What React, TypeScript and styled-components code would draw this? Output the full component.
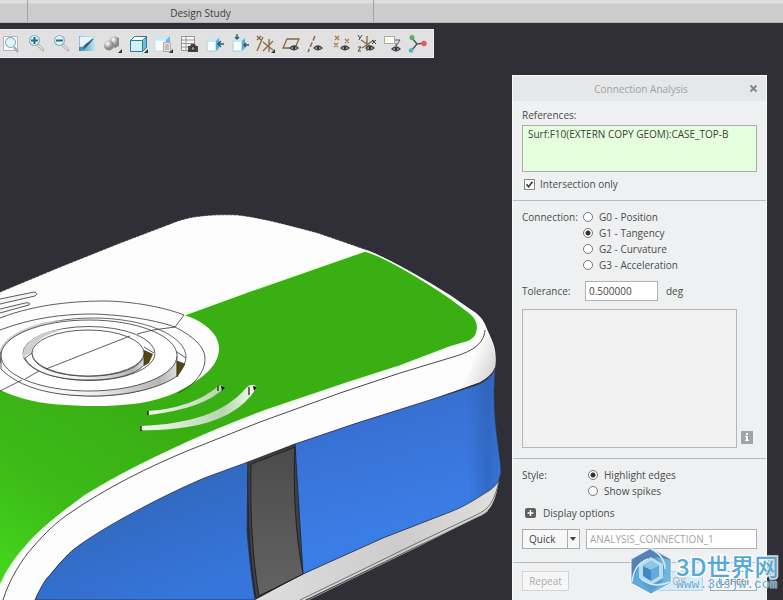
import React, { useState } from "react";
import styled, { createGlobalStyle } from "styled-components";

const GlobalStyle = createGlobalStyle`
  * { box-sizing: border-box; }
  body { margin: 0; background: #302f37; }
  body, button, input, select, textarea {
    font-family: "Open Sans", "Noto Sans", sans-serif;
    font-size: 10px;
    color: #4c4c4c;
  }
`;

const Page = styled.div`
  position: relative;
  display: flex;
  flex-direction: column;
  height: 100vh;
  overflow: hidden;
`;

const Scene = styled.svg`
  position: absolute;
  inset: 0;
  width: 100%;
  height: 100%;
`;

const GroupBar = styled.header`
  position: relative;
  display: flex;
  height: 23px;
  flex: none;
  background: linear-gradient(#dedede 0, #dedede 3px, #cbcbcb 4px, #cdcdcd 100%);
  border-bottom: 1px solid #b4b4b4;
`;

const Group = styled.div<{ $width: number }>`
  width: ${(p) => p.$width}px;
  padding-top: 4px;
  border-right: 1px solid #a5a5a5;
  text-align: center;
  line-height: 18px;
  color: #404040;
`;

const Toolbar = styled.nav`
  position: relative;
  display: flex;
  flex: none;
  justify-content: space-between;
  align-items: center;
  width: 100%;
  max-width: 434px;
  height: 29px;
  margin-top: 6px;
  padding-right: 5px;
  background: #e1e1e1;
  border: 1px solid #eee;
  border-left: 0;
`;

const ToolButton = styled.button`
  display: block;
  width: 20px;
  height: 20px;
  padding: 0;
  border: 0;
  background: none;
  svg { display: block; }
`;

const Workspace = styled.main`
  position: relative;
  display: flex;
  justify-content: flex-end;
  align-items: stretch;
  flex: 1;
  min-height: 0;
  padding: 17px 16px 0 0;
`;

const Dialog = styled.section`
  display: flex;
  flex-direction: column;
  width: 255px;
  background: #eef0f1;
  border: 1px solid #fafafa;
  border-bottom: 0;
  overflow: hidden;
`;

const TitleBar = styled.div`
  display: flex;
  align-items: center;
  flex: none;
  height: 25px;
  padding: 0 8px 0 20px;
  background: #e5e7e8;
`;

const Title = styled.h1`
  flex: 1;
  margin: 0;
  text-align: center;
  font-size: 10px;
  font-weight: 400;
  color: #a0a2a4;
`;

const CloseButton = styled.button`
  display: flex;
  padding: 0;
  border: 0;
  background: none;
`;

const Section = styled.div<{ $height?: number; $top?: number }>`
  display: flex;
  flex-direction: column;
  flex: none;
  height: ${(p) => (p.$height ? p.$height + "px" : "auto")};
  padding: ${(p) => p.$top ?? 8}px 9px 0;
  & + & { border-top: 1px solid #b9bbbc; }
`;

const Caption = styled.label<{ $width?: number }>`
  width: ${(p) => (p.$width ? p.$width + "px" : "auto")};
  flex: none;
  line-height: 16px;
`;

const References = styled.textarea`
  display: block;
  width: 100%;
  height: 47px;
  margin: 2px 0 4px;
  padding: 1px 5px;
  border: 1px solid #a8aeae;
  background: #e6ffdd;
  line-height: 14px;
  color: #3c423c;
  resize: none;
  white-space: nowrap;
  overflow: hidden;
`;

const CheckLabel = styled.label`
  display: flex;
  align-items: center;
  gap: 5px;
  height: 16px;
  padding-left: 2px;
`;

const CheckBox = styled.input`
  appearance: none;
  width: 11px;
  height: 11px;
  margin: 0;
  border: 1px solid #888;
  background: #fff;
  &:checked {
    background: #fff url("data:image/svg+xml,%3Csvg xmlns='http://www.w3.org/2000/svg' viewBox='0 0 9 9'%3E%3Cpath d='M1.5 4.3 3.6 6.8 7.5 1.8' fill='none' stroke='%23333' stroke-width='1.5'/%3E%3C/svg%3E");
  }
`;

const Row = styled.div<{ $gap?: number; $top?: number; $center?: boolean }>`
  display: flex;
  align-items: ${(p) => (p.$center ? "center" : "flex-start")};
  gap: ${(p) => p.$gap ?? 0}px;
  margin-top: ${(p) => p.$top ?? 0}px;
`;

const RadioGroup = styled.div`
  display: flex;
  flex-direction: column;
`;

const RadioLabel = styled.label`
  display: flex;
  align-items: center;
  gap: 6px;
  height: 16px;
`;

const Radio = styled.input`
  appearance: none;
  width: 10px;
  height: 10px;
  margin: 0;
  border: 1px solid #777;
  border-radius: 50%;
  background: #fff;
  &:checked { background: radial-gradient(circle, #333 0, #333 2px, #fff 3px); }
`;

const TextInput = styled.input<{ $width?: number }>`
  width: ${(p) => (p.$width ? p.$width + "px" : "100%")};
  min-width: 0;
  height: 20px;
  padding: 0 3px;
  border: 1px solid #b0b3b4;
  background: #fff;
  color: #444;
  &::placeholder { color: #a3a5a7; opacity: 1; }
`;

const ResultList = styled.div`
  flex: 1;
  height: 139px;
  border: 1px solid #b4b6b7;
  background: #f2f2f2;
`;

const InfoButton = styled.button`
  align-self: flex-end;
  width: 12px;
  height: 13px;
  margin: 0 4px 4px 0;
  padding: 0;
  border: 0;
  background: #a1a3a4;
  svg { display: block; }
`;

const Expander = styled.button`
  display: flex;
  align-items: center;
  gap: 7px;
  height: 16px;
  margin-top: 6px;
  padding: 0 3px;
  border: 0;
  background: none;
`;

const SelectBox = styled.div`
  position: relative;
  flex: none;
  width: 58px;
  select {
    appearance: none;
    display: block;
    width: 100%;
    height: 20px;
    padding: 0 6px;
    border: 1px solid #a9acad;
    border-radius: 0;
    background: #f7f7f7;
    color: #444;
  }
  svg { position: absolute; right: 0; top: 0; pointer-events: none; }
`;

const Actions = styled.div`
  display: flex;
  gap: 7px;
  & > :first-child { margin-right: auto; }
`;

const ActionButton = styled.button<{ $tone?: "accent" | "muted" }>`
  width: 47px;
  height: 20px;
  padding: 0;
  border: 1px solid ${(p) => (p.$tone === "accent" ? "#b5d5e9" : p.$tone === "muted" ? "#d2d4d5" : "#a9acad")};
  background: ${(p) => (p.$tone === "accent" ? "#d6e9f5" : "#f6f6f6")};
  color: ${(p) => (p.$tone ? "#aaacae" : "#555")};
`;

const Brand = styled.div`
  position: absolute;
  right: 5px;
  bottom: 5px;
  display: flex;
  align-items: center;
  gap: 4px;
  pointer-events: none;
  svg { display: block; }
`;

const BrandText = styled.div`
  width: 102px;
  font-family: "Noto Sans CJK SC", sans-serif;
  font-size: 24px;
  font-weight: 500;
  line-height: 26px;
  white-space: nowrap;
  color: #55a9d9;
  paint-order: stroke fill;
  -webkit-text-stroke: 3px rgba(255, 255, 255, 0.85);
`;

const BrandUrl = styled.div`
  font-family: "Liberation Mono", monospace;
  font-size: 13px;
  font-weight: 400;
  line-height: 11px;
  color: #62aad6;
  -webkit-text-stroke: 1px rgba(255, 255, 255, 0.6);
`;

const teal = "#257f9e";
const brown = "#8b6a3b";

const Eye = ({ x = 9, y = 11 }: { x?: number; y?: number }) => (
  <g transform={`translate(${x} ${y})`}>
    <path d="M0 3Q4-1 8 3Q4 6.500 0 3Z" fill="#eee" stroke="#444" strokeWidth="1.300" />
    <circle cx="4" cy="2.700" r="1.500" fill="#333" />
  </g>
);
const Corner = () => <path d="M20 15v4h-4z" fill="#333" />;
const Lens = ({ sign }: { sign: string }) => (
  <>
    <path d="m12 11 5 5" stroke="#b9b9b9" strokeWidth="3" strokeLinecap="round" />
    <path d="m12 11 4.500 4.500" stroke="#f4f4f4" strokeWidth="1" />
    <circle cx="8.500" cy="6.500" r="5" fill="#e2f3f8" stroke="#8fb4c2" strokeWidth="1.200" />
    <path d={sign} stroke="#18708f" strokeWidth="2" />
  </>
);
const Cube = () => (
  <>
    <path d="M3 7h9v10H3z" fill="#fafdff" stroke="#9fd0e2" />
    <path d="m3 7 3-3h9l-3 3z" fill="#c5eaf6" />
    <path d="m12 7 3-3v10l-3 3z" fill="#4fb0d4" />
  </>
);

const tools: { name: string; art: React.ReactNode }[] = [
  { name: "Refit", art: <><path d="M3.500 2.500h14v14h-14z" fill="#f8fafa" stroke="#b1b8bb" /><path d="m14 13 4 5" stroke="#aaa" strokeWidth="2.500" /><circle cx="10.500" cy="8.500" r="5" fill="#e0f3f8" stroke="#73a3b5" /></> },
  { name: "Zoom in", art: <Lens sign="M5 6.500h7M8.500 3v7" /> },
  { name: "Zoom out", art: <Lens sign="M5 6.500h7" /> },
  { name: "Repaint", art: <><defs><linearGradient id="paint"><stop stopColor="#2f90b0" /><stop offset="1" stopColor="#c4e6f0" /></linearGradient></defs><path d="M2 2h16v15H2z" fill="url(#paint)" /><path d="M2.500 2.500h14L9 12l-6.500 1z" fill="#e8f4f7" /><path d="m16 5-6 7-4 3 2-4z" stroke="#245c70" fill="#426c7c" /></> },
  { name: "Shading", art: <><defs><radialGradient id="ball" cx=".35" cy=".3"><stop stopColor="#fff" /><stop offset="1" stopColor="#8c8c8c" /></radialGradient></defs><path d="m8 4 4-2 5 2v8l-4 2-5-3z" fill="url(#ball)" /><circle cx="7" cy="11.500" r="5" fill="url(#ball)" /><Corner /></> },
  { name: "Saved orientations", art: <><path d="M2.500 6.500h12v11h-12z" fill="#d4f0f9" stroke={teal} /><path d="m2.500 6.500 4-4h12l-4 4z" fill="#fff" stroke={teal} /><path d="m14.500 6.500 4-4v11l-4 4z" fill="#70bdd6" stroke={teal} /><Corner /></> },
  { name: "View manager", art: <><path d="M2 6h10v11H2z" fill="#fafdff" stroke="#c3e2ee" /><path d="m2 6 3-4h12l-4 4z" fill="#c5eaf6" /><path d="m13 6 4-4v11l-4 4z" fill="#6bbddb" /><path d="M10.500 8.500h7v9h-7z" fill="#e4e4e4" stroke="#aaa" /><path d="M12 11h4m-4 2h4m-4 2h4" stroke="#999" /><Corner /></> },
  { name: "Snapshot", art: <><path d="M2.500 2.500h13v14h-13zM2.500 6h13m-13 3.500h13m-13 3.500h13M7 2.500v14" fill="#f7f7f7" stroke="#969696" /><path d="M9 12h2l1-2h4l1 2h2v6H9z" fill="#444" /><circle cx="14" cy="14.500" r="2" fill="#999" stroke="#222" /></> },
  { name: "Side view", art: <><Cube /><path d="M20 10h-6m3-3-3 3 3 3" fill="none" stroke="#255c6c" strokeWidth="1.500" /></> },
  { name: "Section view", art: <><Cube /><path d="M7 0v5M5 3l2 2 2-2M19 11h-5m2-2-2 2 2 2" fill="none" stroke="#35545e" strokeWidth="1.300" /></> },
  { name: "Datum display", art: <><path d="M8 3 2 17M2 2l4 4m0-4L2 6M14 5v13M8 8l10 8m0-9L8 17" fill="none" stroke={brown} strokeWidth="1.300" /><Corner /></> },
  { name: "Plane display", art: <><path d="M6 5h12l-4 9H2z" fill="none" stroke={brown} strokeWidth="1.300" /><Eye /></> },
  { name: "Axis display", art: <><path d="M9 2 2 18" fill="none" stroke={brown} strokeWidth="1.500" strokeDasharray="5 2" /><Eye x={8} /></> },
  { name: "Point display", art: <><path d="m3 2 4 4m0-4L3 6m10-1 4 4m0-4-4 4M2 9l4 4m0-4-4 4" stroke="#a3784a" strokeWidth="1.300" /><Eye /></> },
  { name: "Coordinate display", art: <><path d="M10 2v15M5 14l12-8M4 6l12 8" stroke={brown} strokeWidth="1.300" /><path d="m1 1 2 3 2-3M3 4 2 6M1 13h3l-3 4h3M15 6l4 4m0-4-4 4" stroke="#444" fill="none" /><Eye /></> },
  { name: "Annotation display", art: <><path d="M1.500 2.500h10v7h-10z" fill="#fffde9" stroke="#aaa" /><path d="M12 6h5l-4 6v-3" fill="none" stroke="#555" /><Eye x={9} y={12} /></> },
  { name: "Spin center", art: <><path d="m4 4 5 6 8-1M9 10l-6 7" fill="none" stroke="#555" strokeWidth="1.500" /><circle cx="4" cy="3.500" r="2.500" fill="#5cad68" /><circle cx="16" cy="9.500" r="2.700" fill="#dd5c5c" /><circle cx="3" cy="16.500" r="2.300" fill="#59a9cb" /></> },
];

const Model = () => (
  <Scene viewBox="0 0 783 600" preserveAspectRatio="xMinYMin slice" role="img" aria-label="Shaded model of the case">
    <defs>
      <linearGradient id="green" gradientUnits="userSpaceOnUse" x1="0" y1="575" x2="110" y2="400">
        <stop stopColor="#43d61d" /><stop offset=".5" stopColor="#3cba17" /><stop offset="1" stopColor="#3aaf14" />
      </linearGradient>
      <linearGradient id="blueL" gradientUnits="userSpaceOnUse" x1="130" y1="510" x2="170" y2="610">
        <stop stopColor="#316ac2" /><stop offset="1" stopColor="#3676dc" />
      </linearGradient>
      <linearGradient id="blueR" gradientUnits="userSpaceOnUse" x1="360" y1="420" x2="390" y2="530">
        <stop stopColor="#3870d2" /><stop offset="1" stopColor="#3b7de6" />
      </linearGradient>
      <linearGradient id="edge" gradientUnits="userSpaceOnUse" x1="468" y1="0" x2="500" y2="0">
        <stop stopColor="#285aaa" stopOpacity="0" /><stop offset=".6" stopColor="#285aaa" stopOpacity=".5" /><stop offset="1" stopColor="#285aaa" stopOpacity=".2" />
      </linearGradient>
      <linearGradient id="rim" gradientUnits="userSpaceOnUse" x1="472" y1="360" x2="496" y2="370">
        <stop stopColor="#fdfdfd" /><stop offset="1" stopColor="#d2d2d2" />
      </linearGradient>
      <linearGradient id="skirt" gradientUnits="userSpaceOnUse" x1="260" y1="0" x2="490" y2="0">
        <stop stopColor="#dedede" /><stop offset=".6" stopColor="#cdcbcb" /><stop offset="1" stopColor="#dededc" />
      </linearGradient>
      <linearGradient id="pillar" x2="0" y2="1"><stop stopColor="#4b4b4b" /><stop offset="1" stopColor="#636363" /></linearGradient>
      <linearGradient id="slot"><stop stopColor="#f1ffee" /><stop offset=".7" stopColor="#b8d4b1" /><stop offset="1" stopColor="#f4fff0" /></linearGradient>
      <linearGradient id="side"><stop stopColor="#fff" /><stop offset=".5" stopColor="#f2f2f2" /><stop offset=".9" stopColor="#b5b5b5" /><stop offset="1" stopColor="#dedede" /></linearGradient>
    </defs>

    <path fill="#302f37" d="M0 0H3000V2000H0Z" />
    <path fill="#fdfdfd" d="M0 292 60 267 120 243 170 224C188 216 210 214 238 215 264 218 292 226 318 233L350 244 367 250C391 260 423 278 450 295L470 309C479 314 484 320 487 329L491 338C494 345 497 352 495 368L480 382 430 400 357 423 295 444 248 463C179 489 100 530 73 550 54 567 43 583 35 600H0Z" />
    <path fill="url(#rim)" d="M453 357C470 352 484 344 485 330L491 340C495 350 496 359 495 368 491 375 486 379 480 382L445 394Z" />
    <path fill="url(#green)" d="M184 315 250 291 365 251C385 256 430 284 450 298L470 313C477 319 479 325 477 332 476 337 473 340 467 342L450 347 400 366 347 383 267 410C200 435 130 467 83 497 57 516 37 533 27 545 13 560 5 574 0 586V390C20 399 40 404 67 405 92 407 115 406 133 404 153 402 174 395 190 385 208 374 219 363 219 348 219 334 204 321 184 315Z" />
    <path fill="none" stroke="#edffe8" strokeWidth="1.500" d="M184 315 250 291 365 251C385 256 430 284 450 298L470 313C477 319 479 325 477 332 476 337 473 340 467 342L450 347 400 366 347 383 267 410C200 435 130 467 83 497 57 516 37 533 27 545 13 560 5 574 0 586" />
    <path fill="none" stroke="#333" strokeWidth=".8" d="M0 292 60 267 120 243 170 224C188 216 210 214 238 215 264 218 292 226 318 233L350 244 367 250" strokeDasharray="3 1" />
    <path fill="none" stroke="#353535" strokeWidth=".9" d="M3 600C9 580 22 559 33 547 46 532 57 522 67 515 107 487 151 466 187 451L260 422 340 393 400 373 453 357C470 352 484 345 485 330" />

    <path fill="url(#blueL)" stroke="#2b3040" strokeWidth=".8" d="M35 600C41 586 47 577 50 575 61 562 68 554 73 550 102 527 172 491 207 477L248 462 247 530C249 556 252 581 255 600Z" />
    <path fill="url(#skirt)" d="M255 600 303 574 383 538 450 512 490 490 499 478C498 492 493 506 488 510 485 514 480 516 480 516L417 546 305 600Z" />
    <path fill="url(#blueR)" stroke="#303746" strokeWidth=".8" d="M295 444 357 423 430 400 477 385C487 381 493 375 495 368L494 390C494 426 499 447 501 470 500 480 497 485 490 490 479 497 466 506 450 512L383 538 303 574C294 530 293 485 295 444Z" />
    <path fill="url(#edge)" d="M462 390 477 385C487 381 493 375 495 368L494 390C494 426 499 447 501 470 500 480 497 485 490 490L462 506Z" />
    <path fill="none" stroke="#555" strokeWidth=".8" d="M499 478C498 490 492 504 487 508 483 512 478 514 474 516L415 544 300 600" />
    <path fill="none" stroke="#b5b5b5" strokeWidth=".8" d="m488 511-71 36-109 53" />
    <path fill="#3f4043" stroke="#1c2230" strokeWidth=".8" d="M248 462 295 444 303 574 256 598C251 570 247 520 248 462Z" />
    <path fill="url(#pillar)" stroke="#1b1b1b" strokeWidth=".9" d="M251 464 295 447C293 486 295 532 303 574L259 596C252 556 250 510 251 464Z" />

    <ellipse cx="102" cy="353" rx="102" ry="52" fill="none" />
    <path fill="none" stroke="#333" strokeWidth=".8" d="M0 318C36 304 75 301 107 301 140 302 169 309 184 315L175 327C196 338 205 348 205 359 205 373 193 386 178 393M0 330C32 318 62 314 93 314 128 315 158 321 175 327" />
    <ellipse cx="93" cy="357" rx="93" ry="39" fill="#fff" stroke="#444" strokeWidth=".8" />
    <path fill="#ccc" d="M0 350C5 334 37 321 62 320 33 327 9 339 2 352Z" />
    <path fill="url(#side)" stroke="#333" strokeWidth=".8" d="M1 357V369C20 388 52 396 93 396 127 396 161 388 177 376V356Z" />
    <ellipse cx="89" cy="355.500" rx="88" ry="35.500" fill="#fff" stroke="#333" strokeWidth=".8" />
    <path fill="#534710" stroke="#333" strokeWidth=".6" d="m177 361 8 3-4 7-4 6Z" />

    <ellipse cx="89" cy="353.500" rx="66" ry="27" fill="#fff" stroke="#333" strokeWidth=".8" />
    <path fill="#cfcfcf" d="M23 357C22 340 43 331 64 329 43 335 32 344 32 352Z" />
    <path fill="#534710" d="m144 350 9 4-4 9-5 3Z" />
    <path fill="url(#side)" stroke="#333" strokeWidth=".8" d="M32 353C33 384 144 384 144 353V365C135 375 115 380 89 380 54 380 31 371 25 358Z" />
    <ellipse cx="88" cy="353" rx="56" ry="23" fill="#fff" stroke="#333" strokeWidth=".8" />
    <path fill="none" stroke="#333" strokeWidth=".8" d="M144 347 154 353M177 352 186 358M0 391 22 380M25 379 39 371M46 369 130 336M137 334 153 330 175 327" />

    <path fill="#f3f3f3" stroke="#333" strokeWidth=".8" d="M0 299 34 292Q39 293 35 296L0 304M0 309 25 303Q31 302 29 305L0 313" />
    <path fill="url(#slot)" d="M148 411C178 409 202 400 217 387Q221 384 225 387 206 408 149 415ZM141 426C189 424 225 413 246 388Q252 382 257 387 238 419 187 427 159 431 141 430Z" />
    <path fill="none" stroke="#111" strokeWidth="1.200" d="M218 386v5M148 411v4M141 426v5M249 387v8" />
    <path fill="#111" d="m221 386 4 1-3 4ZM253 386l4 1-3 4Z" />
  </Scene>
);

const connections = ["G0 - Position", "G1 - Tangency", "G2 - Curvature", "G3 - Acceleration"];
const styles = ["Highlight edges", "Show spikes"];

function Choices({ name, items, start }: { name: string; items: string[]; start: number }) {
  const [value, setValue] = useState(start);
  return (
    <RadioGroup role="radiogroup" aria-label={name}>
      {items.map((item, i) => (
        <RadioLabel key={item}>
          <Radio type="radio" name={name} checked={value === i} onChange={() => setValue(i)} />
          {item}
        </RadioLabel>
      ))}
    </RadioGroup>
  );
}

export default function App() {
  return (
    <Page>
      <GlobalStyle />
      <Model />
      <GroupBar>
        <Group $width={28} />
        <Group $width={346}>Design Study</Group>
      </GroupBar>
      <Toolbar aria-label="Graphics">
        {tools.map((tool) => (
          <ToolButton key={tool.name} aria-label={tool.name}>
            <svg width="20" height="20" viewBox="0 0 20 20">{tool.art}</svg>
          </ToolButton>
        ))}
      </Toolbar>
      <Workspace>
        <Dialog aria-label="Connection Analysis">
          <TitleBar>
            <Title>Connection Analysis</Title>
            <CloseButton aria-label="Close">
              <svg width="9" height="9" viewBox="0 0 9 9"><path d="m1.500 1.500 6 6m0-6-6 6" stroke="#858789" strokeWidth="2" /></svg>
            </CloseButton>
          </TitleBar>
          <Section $height={99} $top={6}>
            <Caption htmlFor="references">References:</Caption>
            <References id="references" defaultValue="Surf:F10(EXTERN COPY GEOM):CASE_TOP-B" />
            <CheckLabel><CheckBox type="checkbox" defaultChecked />Intersection only</CheckLabel>
          </Section>
          <Section $height={258}>
            <Row>
              <Caption as="span" $width={61}>Connection:</Caption>
              <Choices name="Connection" items={connections} start={1} />
            </Row>
            <Row $top={8} $center>
              <Caption htmlFor="tolerance" $width={63}>Tolerance:</Caption>
              <Row $gap={8} $center>
                <TextInput id="tolerance" $width={73} defaultValue="0.500000" />
                <Caption as="span">deg</Caption>
              </Row>
            </Row>
            <Row $gap={4} $top={8}>
              <ResultList />
              <InfoButton aria-label="Information">
                <svg width="12" height="13" viewBox="0 0 12 13"><path d="M5 2h2v2H5zM4 5h3v4h1v1H4V9h1V6H4z" fill="#fff" /></svg>
              </InfoButton>
            </Row>
          </Section>
          <Section $height={104}>
            <Row>
              <Caption as="span" $width={66}>Style:</Caption>
              <Choices name="Style" items={styles} start={0} />
            </Row>
            <Expander aria-expanded="false">
              <svg width="11" height="10" viewBox="0 0 11 10"><rect width="11" height="10" rx="2" fill="#5f6163" /><path d="M2.500 5h6M5.500 2v6" stroke="#fff" strokeWidth="1.500" /></svg>
              Display options
            </Expander>
            <Row $gap={6} $top={8}>
              <SelectBox>
                <select aria-label="Analysis type"><option>Quick</option><option>Saved</option><option>Feature</option></select>
                <svg width="13" height="20" viewBox="0 0 13 20"><path d="M.5 0v20" stroke="#a9acad" /><path d="M3 8h6l-3 4z" fill="#444" /></svg>
              </SelectBox>
              <TextInput aria-label="Analysis name" placeholder="ANALYSIS_CONNECTION_1" />
            </Row>
          </Section>
          <Section>
            <Actions>
              <ActionButton $tone="muted" disabled>Repeat</ActionButton>
              <ActionButton $tone="accent">OK</ActionButton>
              <ActionButton>Cancel</ActionButton>
            </Actions>
          </Section>
        </Dialog>
      </Workspace>
      <Brand>
        <svg width="42" height="48" viewBox="0 0 42 48">
          <path d="M21 1 41 12v24L21 47 1 36V12Z" fill="#5b9dcc" stroke="#fff" strokeOpacity=".8" />
          <path d="M21 2 40 13 26 10 10 17 2 34V13Z" fill="#5582b3" />
          <path d="M40 13v23L21 46 32 35 35 20 26 10Z" fill="#6bb8df" />
          <path d="M2 35 9 19 11 32 21 46Z" fill="#5aaddd" />
          <path d="m21 10 12 7v14l-12 7-12-7V17Z" fill="#b9dcef" />
          <path d="m21 14 8 5v10l-8 5-8-5V19Z" fill="#4187c1" />
          <path d="m13 19 8 4 8-4-8-5Z" fill="#8fc6e6" />
          <path d="M21 23v11l8-5V19Z" fill="#63abd9" />
          <path d="M2 35Q4 17 18 12M21 2Q35 9 35 22M40 35Q24 42 11 32" fill="none" stroke="#d6eaf6" strokeWidth="1.500" />
        </svg>
        <BrandText>
          3D世界网
          <BrandUrl>www.3dsjw.com</BrandUrl>
        </BrandText>
      </Brand>
    </Page>
  );
}
